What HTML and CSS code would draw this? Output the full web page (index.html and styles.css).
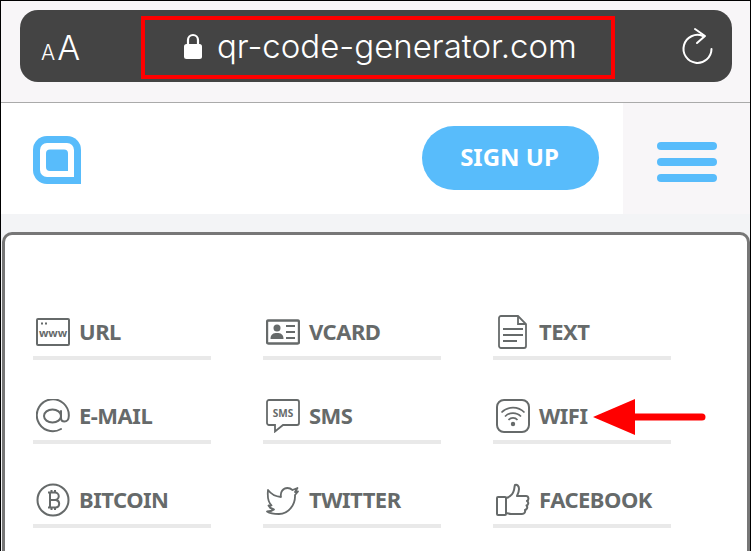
FILE: index.html
```html
<!DOCTYPE html>
<html lang="en">
<head>
    <meta charset="UTF-8">
    <meta name="viewport" content="width=device-width, initial-scale=1.0">
    <title>QR Code Generator</title>
    <link rel="stylesheet" href="styles.css">
</head>
<body>
    <div class="frame">
        <div class="browser-bar">
            <div class="address">
                <div class="text-size"><span class="small-a">A</span><span class="big-a">A</span></div>
                <div class="url-box">
                    <svg class="lock" viewBox="0 0 18 26" width="18" height="26">
                        <path d="M4 12V7a5 5 0 0 1 10 0v5" fill="none" stroke="#fff" stroke-width="2.2"/>
                        <rect x="0" y="11" width="18" height="15" rx="2.5" fill="#fff"/>
                    </svg>
                    <span class="url">qr-code-generator.com</span>
                </div>
                <svg class="reload" viewBox="0 0 32 38" width="32" height="38">
                    <path d="M22 9A14 14 0 1 0 30.500 22" fill="none" stroke="#fff" stroke-width="2" stroke-linecap="round"/>
                    <path d="M14 2l10 7-8 7" fill="none" stroke="#fff" stroke-width="2" stroke-linecap="round" stroke-linejoin="round"/>
                </svg>
            </div>
        </div>

        <header class="site-header">
            <svg class="logo" viewBox="0 0 48 48" width="48" height="48">
                <path d="M14 0h20a14 14 0 0 1 14 14v34H14A14 14 0 0 1 0 34V14A14 14 0 0 1 14 0z" fill="#58bcfb"/>
                <path d="M14 7h20a7 7 0 0 1 7 7v27H14a7 7 0 0 1-7-7V14a7 7 0 0 1 7-7z" fill="#fff"/>
                <path d="M17 13.500h14a4 4 0 0 1 4 4V35H17a4 4 0 0 1-4-4V17.500a4 4 0 0 1 4-4z" fill="#58bcfb"/>
            </svg>
            <a class="sign-up" href="#">SIGN UP</a>
            <div class="menu">
                <span></span>
                <span></span>
                <span></span>
            </div>
        </header>

        <main class="types">
            <div class="type-grid">
                <a class="type" href="#">
                    <svg class="icon" viewBox="0 0 34 34">
                        <rect x="1" y="4" width="32" height="26" rx="1" fill="none" stroke="#666a6a" stroke-width="2"/>
                        <rect x="5" y="7.500" width="2" height="2" fill="#666a6a"/>
                        <rect x="9" y="7.500" width="2" height="2" fill="#666a6a"/>
                        <text x="17" y="22" class="icon-text www">www</text>
                    </svg>
                    <span>URL</span>
                </a>
                <a class="type" href="#">
                    <svg class="icon" viewBox="0 0 34 34">
                        <rect x="1" y="5.500" width="32" height="23" rx="1.500" fill="none" stroke="#666a6a" stroke-width="2.400"/>
                        <circle cx="11" cy="13" r="3.500" fill="#666a6a"/>
                        <path d="M4.500 24c0-5 3-6 6.500-6s6.500 1 6.500 6z" fill="#666a6a"/>
                        <path d="M20 11h9M20 17h9M20 23h9" stroke="#666a6a" stroke-width="1.800"/>
                    </svg>
                    <span>VCARD</span>
                </a>
                <a class="type" href="#">
                    <svg class="icon" viewBox="0 0 34 34">
                        <path d="M5 1h17l8 8v22a2 2 0 0 1-2 2H5a2 2 0 0 1-2-2V3a2 2 0 0 1 2-2z" fill="none" stroke="#666a6a" stroke-width="1.800"/>
                        <path d="M22 1v8h8" fill="none" stroke="#666a6a" stroke-width="1.800"/>
                        <path d="M7 14h20M7 20h20M7 26h14" stroke="#666a6a" stroke-width="2"/>
                    </svg>
                    <span>TEXT</span>
                </a>
                <a class="type" href="#">
                    <svg class="icon" viewBox="0 0 34 34">
                        <path d="M25 30A16 16 0 1 1 32.800 17c0 3.500-2 5.500-4.300 5.500-2 0-3.500-1.500-3.500-3.500v-7" fill="none" stroke="#666a6a" stroke-width="2" stroke-linecap="round"/>
                        <ellipse cx="16.500" cy="17" rx="8.500" ry="6.500" fill="none" stroke="#666a6a" stroke-width="2"/>
                    </svg>
                    <span>E-MAIL</span>
                </a>
                <a class="type" href="#">
                    <svg class="icon" viewBox="0 0 34 34">
                        <path d="M3 1h28a2 2 0 0 1 2 2v21a2 2 0 0 1-2 2H17l-8 6.500V26H3a2 2 0 0 1-2-2V3a2 2 0 0 1 2-2z" fill="none" stroke="#666a6a" stroke-width="1.800"/>
                        <text x="17" y="18" class="icon-text sms">SMS</text>
                    </svg>
                    <span>SMS</span>
                </a>
                <a class="type" href="#">
                    <svg class="icon" viewBox="0 0 34 34">
                        <rect x="1" y="1" width="32" height="32" rx="7" fill="none" stroke="#666a6a" stroke-width="2"/>
                        <path d="M5.500 13.500a16 16 0 0 1 23 0M9 17.500a11 11 0 0 1 16 0M12.500 21a6 6 0 0 1 9 0" fill="none" stroke="#666a6a" stroke-width="1.700"/>
                        <circle cx="17" cy="25" r="2.200" fill="#666a6a"/>
                    </svg>
                    <span>WIFI</span>
                </a>
                <a class="type" href="#">
                    <svg class="icon" viewBox="0 0 34 34">
                        <circle cx="17" cy="17" r="15.500" fill="none" stroke="#666a6a" stroke-width="2"/>
                        <path d="M12 9.500h7a3.500 3.500 0 0 1 0 7.500h-6h7a3.800 3.800 0 0 1 0 7.500h-8M14 9.500v15M15.500 7v2.500M19 7v2.500M15.500 24.500V27M19 24.500V27" fill="none" stroke="#666a6a" stroke-width="2"/>
                    </svg>
                    <span>BITCOIN</span>
                </a>
                <a class="type" href="#">
                    <svg class="icon" viewBox="0 0 34 34">
                        <path d="M2 7c3 4 7 6.500 13 7-1-5 2-9 6.500-9 2.200 0 3.800 1 5 2l5-2-2.500 4 3-.5-3 3.500c.5 9-6 19-16 19-4 0-9-.5-12-2.500 3 0 5-.500 7-2-3-.5-4.500-2-5.500-4 1 .2 2 .2 3-.2C3 20 1 16.500 2 7z" fill="none" stroke="#666a6a" stroke-width="1.800" stroke-linejoin="round"/>
                    </svg>
                    <span>TWITTER</span>
                </a>
                <a class="type" href="#">
                    <svg class="icon" viewBox="0 0 34 34">
                        <rect x="1" y="14" width="9" height="18" rx="1" fill="none" stroke="#666a6a" stroke-width="2"/>
                        <path d="M10 15c4-1 7-4 8-8 .5-2 .5-4 1-5 2-1 4 1 4 4 0 3-1 5-2 7h9c3 0 3 4 1 5 2 1 1.500 4-.5 4.500 1.500 1.500.5 4-1.500 4.500.5 2-.5 4-3 4H15c-2 0-3-1-5-1" fill="none" stroke="#666a6a" stroke-width="2" stroke-linejoin="round"/>
                    </svg>
                    <span>FACEBOOK</span>
                </a>
            </div>
            <svg class="arrow" viewBox="0 0 113 36" width="113" height="36">
                <path d="M0 18L42 0v14.500h67a3.500 3.500 0 0 1 0 7H42V36z" fill="#f00"/>
            </svg>
        </main>
    </div>
</body>
</html>
```

FILE: styles.css
```css
* {
    margin: 0;
    padding: 0;
    box-sizing: border-box;
}

body {
    width: 751px;
    height: 551px;
    overflow: hidden;
    background: #fff;
    font-family: 'Noto Sans', sans-serif;
}

.frame {
    height: 551px;
    border: 1px solid #000;
    border-bottom: none;
    display: flex;
    flex-direction: column;
    background: #f3f4f6;
}

/* Browser bar */
.browser-bar {
    height: 102px;
    padding: 9px 18px 0 19px;
    background: #f8f6f8;
    border-bottom: 1px solid #aaa;
    flex: none;
}

.address {
    height: 72px;
    background: #444;
    border-radius: 18px;
    display: flex;
    align-items: center;
    color: #fff;
    font-family: 'Inter', sans-serif;
}

.text-size {
    width: 121px;
    padding: 4px 0 0 21px;
    font-weight: 300;
    line-height: 1;
    display: flex;
    align-items: baseline;
}

.small-a {
    font-size: 21px;
    margin-right: 2px;
}

.big-a {
    font-size: 34px;
}

.url-box {
    width: 474px;
    height: 63px;
    margin-top: 3px;
    border: 4px solid #f00;
    display: flex;
    align-items: center;
    padding-left: 39px;
    gap: 15px;
}

.lock {
    margin-top: -3px;
}

.url {
    font-size: 33px;
    font-weight: 300;
    white-space: nowrap;
    margin-top: -4px;
}

.reload {
    margin-left: 66px;
}

/* Site header */
.site-header {
    height: 111px;
    background: #fff;
    display: flex;
    align-items: center;
    padding-left: 32px;
    flex: none;
}

.logo {
    flex: none;
    margin-top: 3px;
}

.sign-up {
    margin-left: auto;
    margin-right: 24px;
    margin-bottom: 1px;
    padding: 0 2px 3px 0;
    width: 177px;
    height: 64px;
    border-radius: 32px;
    background: #58bcfb;
    color: #fff;
    font-size: 24px;
    font-weight: 700;
    text-decoration: none;
    display: flex;
    align-items: center;
    justify-content: center;
}

.menu {
    width: 127px;
    height: 100%;
    padding-top: 7px;
    background: #f8f6f8;
    display: flex;
    flex-direction: column;
    justify-content: center;
    align-items: center;
    gap: 8px;
}

.menu span {
    width: 60px;
    height: 8px;
    border-radius: 4px;
    background: #58bcfb;
}

/* QR type list */
.types {
    position: relative;
    margin: 18px 0 0 1px;
    flex: 1;
    height: 340px;
    background: #fff;
    border: 3px solid #777;
    border-bottom: none;
    border-radius: 10px 10px 0 0;
    padding: 41px 0 0 28px;
}

.type-grid {
    display: grid;
    grid-template-columns: repeat(3, 178px);
    grid-auto-rows: 84px;
    column-gap: 52px;
}

.type {
    align-self: end;
    display: flex;
    align-items: center;
    gap: 9px;
    padding: 0 0 7px 3px;
    border-bottom: 4px solid #e9e9e9;
    color: #666a6a;
    font-size: 22px;
    font-weight: 700;
    letter-spacing: -0.5px;
    text-decoration: none;
}

.type span {
    margin-top: -2px;
}

.icon {
    width: 34px;
    height: 34px;
    flex: none;
}

.icon-text {
    font-family: 'Noto Sans', sans-serif;
    text-anchor: middle;
    fill: #666a6a;
    font-weight: 700;
    letter-spacing: 0;
}

.www {
    font-size: 11px;
}

.sms {
    font-size: 10px;
}

.arrow {
    position: absolute;
    left: 588px;
    top: 164px;
}
```
